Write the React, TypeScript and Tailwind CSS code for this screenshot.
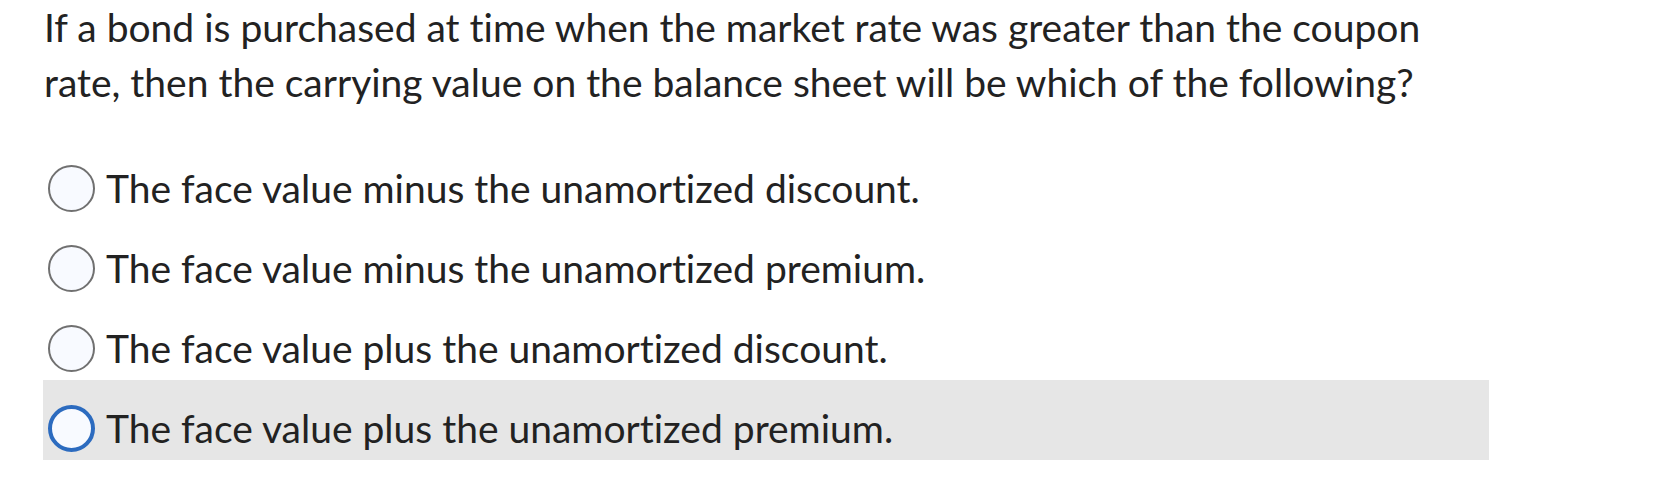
import { useState } from 'react';

const options = [
  'The face value minus the unamortized discount.',
  'The face value minus the unamortized premium.',
  'The face value plus the unamortized discount.',
  'The face value plus the unamortized premium.',
];

export default function App() {
  const [selected, setSelected] = useState(3);

  return (
    <div className="w-[1656px] h-[496px] bg-white text-[#222222] font-['Lato','Liberation_Sans',sans-serif] [font-variant-ligatures:none]">
      {/* Question */}
      <p className="pl-[44px] text-[39px] leading-[55px] w-[1480px]">
        If a bond is purchased at time when the market rate was greater than the coupon rate, then the carrying value on the balance sheet will be which of the following?
      </p>

      {/* Answers */}
      <div className="mt-[30px] ml-[43px] w-[1446px] flex flex-col">
        {options.map((text, i) => {
          const active = i === selected;
          return (
            <label
              key={text}
              onClick={() => setSelected(i)}
              className={`h-[80px] pt-[17px] pl-[5px] flex items-center gap-[11px] cursor-pointer ${
                active ? 'bg-[#e6e6e6]' : ''
              }`}
            >
              <span
                className={`w-[47px] h-[47px] rounded-full bg-[#f8faff] shrink-0 ${
                  active ? 'border-[4px] border-[#2c6bbf]' : 'border-2 border-[#707070]'
                }`}
              />
              <span className="text-[39px] leading-[55px]">{text}</span>
            </label>
          );
        })}
      </div>
    </div>
  );
}
